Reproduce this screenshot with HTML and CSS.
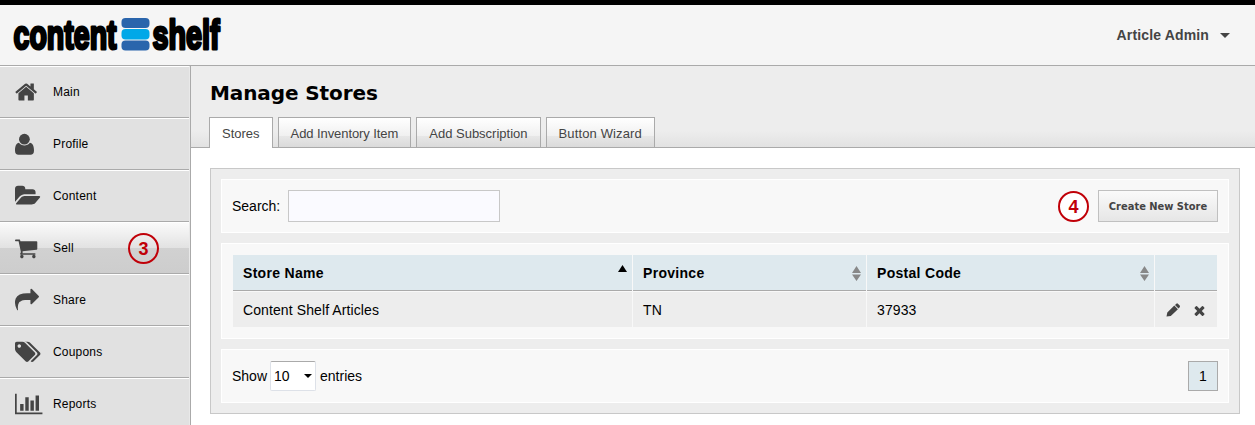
FILE: index.html
```html
<!DOCTYPE html>
<html lang="en">
<head>
    <meta charset="UTF-8">
    <meta name="viewport" content="width=device-width, initial-scale=1.0">
    <title>Manage Stores</title>
    <link rel="stylesheet" href="styles.css">
</head>
<body>
    <!-- Header -->
    <header class="header">
        <svg class="logo" width="216" height="54" viewBox="0 0 216 54">
            <text class="logo-text" transform="translate(1.500 40.700) scale(.61 1)" textLength="169" lengthAdjust="spacingAndGlyphs">content</text>
            <rect x="109.500" y="10" width="28" height="10" rx="4" fill="#2a65ac"/>
            <rect x="109.500" y="21" width="28" height="10.500" rx="4" fill="#00a8e8"/>
            <rect x="109.500" y="32.500" width="28" height="10" rx="4" fill="#2a65ac"/>
            <text class="logo-text" transform="translate(140.500 40.700) scale(.61 1)" textLength="110" lengthAdjust="spacingAndGlyphs">shelf</text>
        </svg>
        <div class="account">Article Admin <span class="caret"></span></div>
    </header>

    <div class="container">
        <!-- Sidebar -->
        <nav class="sidebar">
            <a class="nav-item">
                <span class="nav-icon"><svg width="24" height="24" viewBox="64 0 1792 1792"><path d="M1472 992v480q0 26-19 45t-45 19h-384v-384h-256v384h-384q-26 0-45-19t-19-45v-480q0-1 .5-3t.5-3l575-474 575 474q1 2 1 6zm223-69l-62 74q-8 9-21 11h-3q-13 0-21-7l-692-577-692 577q-12 8-24 7-13-2-21-11l-62-74q-8-10-7-23.500t11-21.500l719-599q32-26 76-26t76 26l244 204v-195q0-14 9-23t23-9h192q14 0 23 9t9 23v408l219 182q10 8 11 21.500t-7 23.500z"/></svg></span>
                Main
            </a>
            <a class="nav-item">
                <span class="nav-icon"><svg width="24" height="24" viewBox="0 0 24 24"><circle cx="9.400" cy="7.200" r="5.400"/><path d="M4 10.800C1.300 11.300 0 14 0 18.500C0 21.500 1.300 22.800 3.500 22.800H15.500C17.700 22.800 19 21.500 19 18.500C19 14 17.700 11.300 14.900 10.800C13.500 12.500 11.600 13.400 9.400 13.400S5.300 12.500 4 10.800z"/></svg></span>
                Profile
            </a>
            <a class="nav-item">
                <span class="nav-icon"><svg width="28" height="24" viewBox="0 0 2090 1792"><path d="M1879 952q0 31-31 66l-336 396q-43 51-120.500 86.500t-143.500 35.500h-1088q-34 0-60.500-13t-26.500-43q0-31 31-66l336-396q43-51 120.500-86.500t143.500-35.500h1088q34 0 60.500 13t26.500 43zm-343-344v160h-832q-94 0-197 47.500t-164 119.500l-337 396-5 6q0-4-.5-12.500t-.5-12.500v-960q0-92 66-158t158-66h320q92 0 158 66t66 158v32h544q92 0 158 66t66 158z"/></svg></span>
                Content
            </a>
            <a class="nav-item active">
                <span class="nav-icon"><svg width="24" height="24" viewBox="64 0 1792 1792"><path d="M704 1536q0 52-38 90t-90 38-90-38-38-90 38-90 90-38 90 38 38 90zm896 0q0 52-38 90t-90 38-90-38-38-90 38-90 90-38 90 38 38 90zm128-1088v512q0 24-16.500 42.500t-40.500 21.500l-1044 122q13 60 13 70 0 16-24 64h920q26 0 45 19t19 45-19 45-45 19h-1024q-26 0-45-19t-19-45q0-11 8-31.500t16-36 21.500-40 15.500-29.500l-177-823h-204q-26 0-45-19t-19-45 19-45 45-19h256q16 0 28.500 6.500t19.500 15.500 13 24.500 8 26 5.500 29.500 4.500 26h1201q26 0 45 19t19 45z"/></svg></span>
                Sell
                <span class="step nav-step">3</span>
            </a>
            <a class="nav-item">
                <span class="nav-icon"><svg width="24" height="24" viewBox="0 0 1792 1792"><path d="M1792 640q0 26-19 45l-512 512q-19 19-45 19t-45-19-19-45v-256h-224q-98 0-175.500 6t-154 21.500-133 42.500-105.500 69.500-80 101-48.500 138.500-17.500 181q0 55 5 123 0 6 2.500 23.500t2.500 26.500q0 15-8.500 25t-23.500 10q-16 0-28-17-7-9-13-22t-13.500-30-10.500-24q-127-285-127-451 0-199 53-333 162-403 875-403h224v-256q0-26 19-45t45-19 45 19l512 512q19 19 19 45z"/></svg></span>
                Share
            </a>
            <a class="nav-item">
                <span class="nav-icon"><svg width="28" height="24" viewBox="0 0 2090 1792"><path d="M448 448q0-53-37.500-90.500t-90.500-37.500-90.500 37.500-37.500 90.500 37.500 90.500 90.500 37.500 90.500-37.500 37.500-90.500zm1067 576q0 53-37 90l-491 492q-39 37-91 37-53 0-90-37l-715-716q-38-37-64.500-101t-26.500-117v-416q0-52 38-90t90-38h416q53 0 117 26.500t102 64.500l715 714q37 39 37 91zm384 0q0 53-37 90l-491 492q-39 37-91 37-36 0-59-14t-53-45l470-470q37-37 37-90 0-52-37-91l-715-714q-38-38-102-64.500t-117-26.500h224q53 0 117 26.500t102 64.500l715 714q37 39 37 91z"/></svg></span>
                Coupons
            </a>
            <a class="nav-item">
                <span class="nav-icon"><svg width="28" height="24" viewBox="0 0 2090 1792"><path d="M640 896v512h-256v-512h256zm384-512v1024h-256v-1024h256zm1024 1152v128h-2048v-1536h128v1408h1920zm-640-896v768h-256v-768h256zm384-384v1152h-256v-1152h256z"/></svg></span>
                Reports
            </a>
        </nav>

        <!-- Main Content -->
        <main class="main-content">
            <div class="page-head">
                <h1>Manage Stores</h1>
                <div class="tabs">
                    <a class="tab current">Stores</a>
                    <a class="tab tab-tight">Add Inventory Item</a>
                    <a class="tab">Add Subscription</a>
                    <a class="tab tab-loose">Button Wizard</a>
                </div>
            </div>

            <section class="panel">
                <div class="box toolbar">
                    <label for="search">Search:</label>
                    <input type="text" id="search" class="search">
                    <span class="step">4</span>
                    <button class="create-btn">Create New Store</button>
                </div>

                <div class="box table-box">
                    <table class="stores">
                        <colgroup>
                            <col class="col-name">
                            <col class="col-province">
                            <col class="col-postal">
                            <col class="col-actions">
                        </colgroup>
                        <thead>
                            <tr>
                                <th><div class="th-inner">Store Name <svg class="sort-asc" width="9" height="7"><path d="M4.500 0L9 7H0z"/></svg></div></th>
                                <th><div class="th-inner">Province <svg class="sort" width="9" height="15"><path d="M4.500 0L9 7H0zM0 8.500h9L4.500 15z"/></svg></div></th>
                                <th><div class="th-inner">Postal Code <svg class="sort" width="9" height="15"><path d="M4.500 0L9 7H0zM0 8.500h9L4.500 15z"/></svg></div></th>
                                <th></th>
                            </tr>
                        </thead>
                        <tbody>
                            <tr>
                                <td>Content Shelf Articles</td>
                                <td>TN</td>
                                <td>37933</td>
                                <td>
                                    <div class="actions">
                                        <svg width="15" height="15" viewBox="0 0 15 15"><path d="M.5 13.500L1.300 9.600L8.300 2.600L11.900 6.200L4.800 13.100zM9 1.900L10.300.7Q11.100 0 11.900.7L13.700 2.500Q14.400 3.300 13.700 4.200L12.500 5.500z"/></svg>
                                        <svg width="15" height="15" viewBox="0 0 1792 1792"><path d="M1490 1322q0 40-28 68l-136 136q-28 28-68 28t-68-28l-294-294-294 294q-28 28-68 28t-68-28l-136-136q-28-28-28-68t28-68l294-294-294-294q-28-28-28-68t28-68l136-136q28-28 68-28t68 28l294 294 294-294q28-28 68-28t68 28l136 136q28 28 28 68t-28 68l-294 294 294 294q28 28 28 68z"/></svg>
                                    </div>
                                </td>
                            </tr>
                        </tbody>
                    </table>
                </div>

                <div class="box pager">
                    <span>Show</span>
                    <div class="page-size">10 <span class="caret"></span></div>
                    <span>entries</span>
                    <a class="page-number">1</a>
                </div>
            </section>
        </main>
    </div>
</body>
</html>
```

FILE: styles.css
```css
* {
    margin: 0;
    padding: 0;
    box-sizing: border-box;
}

body {
    font-family: "Liberation Sans", Arial, sans-serif;
    font-size: 14px;
    background-color: #fff;
    color: #000;
    display: flex;
    flex-direction: column;
    height: 100vh;
    overflow: hidden;
}

svg {
    display: block;
}

/* Header */
.header {
    flex: none;
    height: 66px;
    padding: 0 25px 0 12px;
    background-color: #f5f5f5;
    border-top: 5px solid #000;
    border-bottom: 1px solid #aaa;
    display: flex;
    align-items: center;
    justify-content: space-between;
}

.logo {
    overflow: visible;
}

.logo-text {
    font-size: 41px;
    font-weight: bold;
    stroke: #000;
    stroke-width: 3px;
    stroke-linejoin: round;
}

.account {
    display: flex;
    align-items: center;
    gap: 11px;
    color: #444;
    font-size: 14px;
    font-weight: bold;
    letter-spacing: 0.15px;
}

.caret {
    border: 4px solid transparent;
    border-top-color: currentColor;
    border-bottom: 0;
}

.account .caret {
    border-width: 5px 5px 0;
}

.container {
    display: flex;
    flex: 1;
    min-height: 0;
}

/* Sidebar */
.sidebar {
    width: 191px;
    flex: none;
    padding-right: 1px;
    background-color: #e9e9e9;
    border-right: 1px solid #aaa;
}

.nav-item {
    height: 52px;
    padding-left: 15px;
    display: flex;
    align-items: center;
    background-color: #e1e1e1;
    border-top: 1px solid #fff;
    border-bottom: 1px solid #aaa;
    font-size: 12px;
    letter-spacing: 0.2px;
}

.nav-item.active {
    background: linear-gradient(#fafafa, #e2e2e2 50%, #d1d1d1 51%, #cdcdcd);
}

.nav-icon {
    width: 38px;
    fill: #444;
}

/* Numbered callouts */
.step {
    width: 31px;
    height: 31px;
    border: 2px solid #c00008;
    border-radius: 50%;
    background-color: #fff;
    color: #c00008;
    font-size: 18px;
    font-weight: bold;
    line-height: 28px;
    letter-spacing: 0;
    text-align: center;
}

.nav-step {
    margin-left: auto;
    margin-right: 30px;
    background-color: transparent;
}

/* Page heading and tabs */
.main-content {
    flex: 1;
}

.page-head {
    height: 82px;
    padding: 13px 18px 0;
    display: flex;
    flex-direction: column;
    justify-content: space-between;
    background: linear-gradient(#ededed 80%, #e2e2e2);
    border-bottom: 1px solid #aaa;
}

h1 {
    padding-left: 1px;
    font-family: "DejaVu Sans", Verdana, sans-serif;
    font-size: 20px;
    line-height: 28px;
    letter-spacing: -0.1px;
}

.tabs {
    display: flex;
    gap: 5px;
}

.tab {
    height: 30px;
    padding: 0 12px;
    border: 1px solid #aaa;
    border-bottom: 0;
    background: linear-gradient(#fff, #f0f0f0 62%, #e7e7e7 63%, #dadada);
    color: #444;
    font-size: 13px;
    line-height: 31px;
}

.tab-tight {
    letter-spacing: -0.08px;
}

.tab-loose {
    letter-spacing: 0.13px;
}

.tab.current {
    height: 31px;
    margin-bottom: -1px;
    background: #fff;
}

/* Stores panel */
.panel {
    margin: 20px 15px 0 19px;
    padding: 10px;
    border: 1px solid #c8c8c8;
    background-color: #ededed;
    display: flex;
    flex-direction: column;
    gap: 10px;
}

.box {
    padding: 10px;
    border: 1px solid #fff;
    background-color: #f8f8f8;
}

.toolbar,
.pager {
    height: 54px;
    display: flex;
    align-items: center;
}

.search {
    width: 212px;
    height: 32px;
    margin: 0 auto 0 8px;
    padding: 0 8px;
    border: 1px solid #c8c8c8;
    background-color: #fafaff;
}

.create-btn {
    width: 120px;
    height: 32px;
    margin-left: 9px;
    border: 1px solid #c0c0c0;
    background: linear-gradient(#fafafa, #e6e6e6);
    color: #444;
    font-family: "DejaVu Sans Condensed", Tahoma, sans-serif;
    font-size: 11px;
    font-weight: bold;
    white-space: nowrap;
}

.table-box {
    padding: 11px;
}

.stores {
    width: 984px;
    table-layout: fixed;
    border-collapse: collapse;
}

.col-name {
    width: 400px;
}

.col-province {
    width: 234px;
}

.col-postal {
    width: 288px;
}

.col-actions {
    width: 62px;
}

.stores th,
.stores td {
    padding: 0;
    text-align: left;
}

.stores th {
    height: 36px;
    background: linear-gradient(#aaa, #aaa) bottom / 100% 1px no-repeat #dee9ee;
    box-shadow: inset -1px 0 #f8f8f8;
    letter-spacing: 0.3px;
}

.stores td {
    height: 36px;
    padding: 2px 0 0 10px;
    background-color: #ededed;
    box-shadow: inset -1px 0 #f8f8f8, inset 0 1px #f8f8f8;
    letter-spacing: 0.1px;
}

.stores th:last-child {
    box-shadow: none;
}

.stores td:last-child {
    box-shadow: inset 0 1px #f8f8f8;
}

.th-inner {
    display: flex;
    align-items: center;
    justify-content: space-between;
    padding: 0 6px 0 10px;
}

.sort {
    fill: #888;
}

.sort-asc {
    margin-bottom: 9px;
}

.actions {
    display: flex;
    gap: 11px;
    padding-left: 1px;
    fill: #444;
}

/* Pager */
.pager {
    gap: 4px;
}

.page-size {
    width: 46px;
    height: 30px;
    margin-left: -1px;
    padding: 0 3px;
    display: flex;
    align-items: center;
    justify-content: space-between;
    border: 1px solid #dde1e8;
    border-top-color: #aaa;
    border-radius: 2px;
    background-color: #fff;
}

.page-number {
    width: 30px;
    height: 30px;
    margin-left: auto;
    border: 1px solid #aaa;
    background-color: #dee9ee;
    line-height: 29px;
    text-align: center;
}
```
